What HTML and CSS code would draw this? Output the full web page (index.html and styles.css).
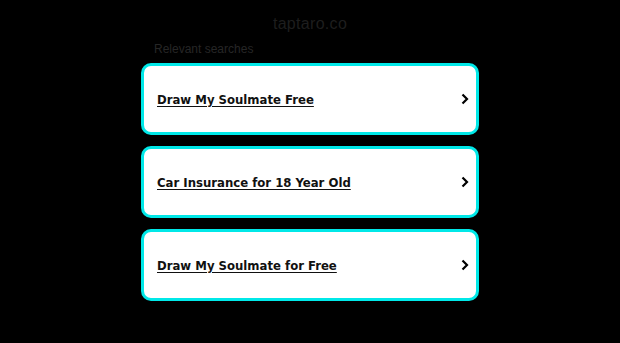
FILE: index.html
```html
<!DOCTYPE html>
<html>
  <head>
    <title>taptaro.co</title>
    <link rel="stylesheet" href="styles.css">
  </head>
  <body>
    <div class="wrap">
      <h1 class="domain">taptaro.co</h1>
      <div class="label">Relevant searches</div>
      <ul class="links">
        <li><a href="#"><span>Draw My Soulmate Free</span><svg class="chev" viewBox="0 0 8 12"><path d="M1.5 1.5 L6 6 L1.5 10.5" /></svg></a></li>
        <li><a href="#"><span>Car Insurance for 18 Year Old</span><svg class="chev" viewBox="0 0 8 12"><path d="M1.5 1.5 L6 6 L1.5 10.5" /></svg></a></li>
        <li><a href="#"><span>Draw My Soulmate for Free</span><svg class="chev" viewBox="0 0 8 12"><path d="M1.5 1.5 L6 6 L1.5 10.5" /></svg></a></li>
      </ul>
    </div>
  </body>
</html>
```
FILE: styles.css
```css
body { margin: 0; background: #000; font-family: "Liberation Sans", Arial, sans-serif; }

.wrap { width: 338px; margin: 0 auto; padding-top: 14px; }

.domain { margin: 0; text-align: center; font-size: 16px; font-weight: normal; color: #1e1e1e; line-height: 20px; letter-spacing: 0.3px; }

.label { margin: 7px 0 6px 13px; font-size: 12px; color: #262626; line-height: 16px; }

.links { list-style: none; margin: 0; padding: 0; }
.links li { margin-bottom: 11px; }
.links a {
  display: flex;
  align-items: center;
  justify-content: space-between;
  height: 72px;
  box-sizing: border-box;
  padding: 0 7px 0 13px;
  background: #fff;
  border: 3px solid #00e8e8;
  border-radius: 10px;
  color: #111;
  text-decoration: none;
}
.links span {
  font-family: "DejaVu Sans Condensed", "DejaVu Sans", Verdana, sans-serif;
  font-stretch: condensed;
  font-weight: bold;
  font-size: 13px;
  text-decoration: underline;
  text-underline-offset: 2px;
}
.chev { width: 8px; height: 12px; fill: none; stroke: #000; stroke-width: 2.2; }
```
